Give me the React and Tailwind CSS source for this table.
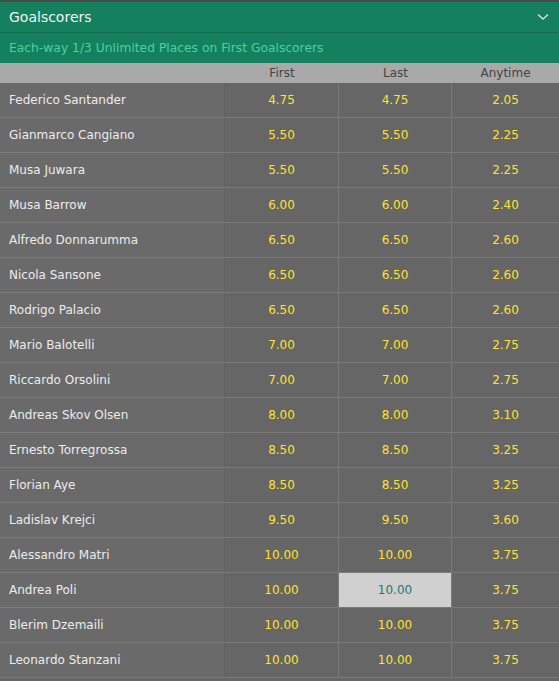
const rows = [
  ["Federico Santander", "4.75", "4.75", "2.05"],
  ["Gianmarco Cangiano", "5.50", "5.50", "2.25"],
  ["Musa Juwara", "5.50", "5.50", "2.25"],
  ["Musa Barrow", "6.00", "6.00", "2.40"],
  ["Alfredo Donnarumma", "6.50", "6.50", "2.60"],
  ["Nicola Sansone", "6.50", "6.50", "2.60"],
  ["Rodrigo Palacio", "6.50", "6.50", "2.60"],
  ["Mario Balotelli", "7.00", "7.00", "2.75"],
  ["Riccardo Orsolini", "7.00", "7.00", "2.75"],
  ["Andreas Skov Olsen", "8.00", "8.00", "3.10"],
  ["Ernesto Torregrossa", "8.50", "8.50", "3.25"],
  ["Florian Aye", "8.50", "8.50", "3.25"],
  ["Ladislav Krejci", "9.50", "9.50", "3.60"],
  ["Alessandro Matri", "10.00", "10.00", "3.75"],
  ["Andrea Poli", "10.00", "10.00", "3.75"],
  ["Blerim Dzemaili", "10.00", "10.00", "3.75"],
  ["Leonardo Stanzani", "10.00", "10.00", "3.75"],
];

function Odds({ value, selected, last }) {
  return (
    <div
      className={
        "flex items-center justify-center " +
        (last ? "" : "border-r border-[#7a7a7a] ") +
        (selected ? "bg-[#d0d0d0] text-[#1f7a6a]" : "text-[#ffe22e]")
      }
    >
      {value}
    </div>
  );
}

export default function App() {
  return (
    <div
      className="w-[559px] h-[681px] overflow-hidden bg-[#666666] text-[12px]"
      style={{ fontFamily: "'DejaVu Sans', sans-serif" }}
    >
      <div className="border-t-2 border-[#4a4a4a] bg-[#14805e]">
        <div className="h-[31px] flex items-center justify-between pl-[9px] pr-[10px] border-b border-[#0f6c4f]">
          <span className="text-[14px] text-[#f2f2f2]">Goalscorers</span>
          <svg width="12" height="8" viewBox="0 0 12 8" fill="none">
            <path d="M1 1.5 L6 6 L11 1.5" stroke="#cfe6dc" strokeWidth="1.4" />
          </svg>
        </div>
        <div className="h-[30px] flex items-center pl-[9px] text-[#47d49b] text-[12.3px]">
          Each-way 1/3 Unlimited Places on First Goalscorers
        </div>
      </div>

      <div className="grid grid-cols-[225px_114px_113px_1fr] h-[20px] bg-[#a9a9a9] text-[#444444] items-center text-center">
        <div />
        <div>First</div>
        <div>Last</div>
        <div>Anytime</div>
      </div>

      {rows.map((r, i) => (
        <div
          key={i}
          className="grid grid-cols-[225px_114px_113px_1fr] h-[35px] border-b border-[#7a7a7a]"
        >
          <div className="flex items-center pl-[9px] bg-[#6a6a6a] text-[#ececec] border-r border-[#626262]">
            {r[0]}
          </div>
          <Odds value={r[1]} />
          <Odds value={r[2]} selected={i === 14} />
          <Odds value={r[3]} last />
        </div>
      ))}
    </div>
  );
}
